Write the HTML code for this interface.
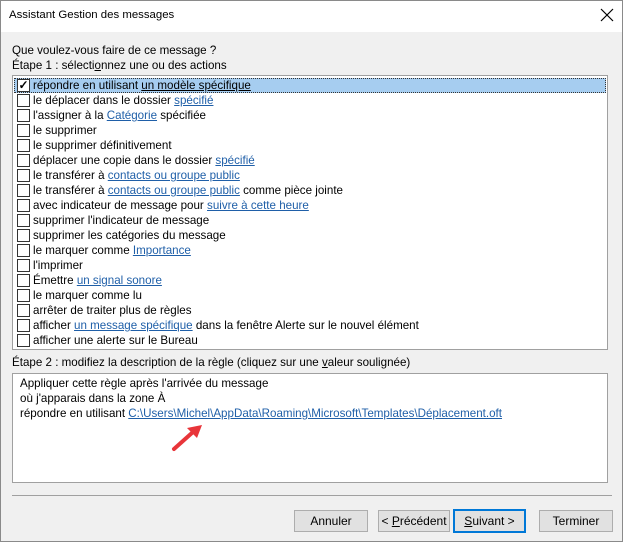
<!DOCTYPE html>
<html><head><meta charset="utf-8"><style>
body{margin:0;width:623px;height:542px;overflow:hidden;font-family:"Liberation Sans",sans-serif;font-size:11.6px;color:#000;background:#f0f0f0;position:relative}
.win{position:absolute;left:0;top:0;width:621px;height:540px;border:1px solid #8a8a8a;background:#f0f0f0}
.title{position:absolute;left:0;top:0;width:621px;height:31px;background:#fff}
.t{position:absolute;white-space:nowrap}
a{color:#1f5fa8;text-decoration:underline}
.list{position:absolute;left:11px;top:74px;width:594px;height:273px;border:1px solid #a0a0a0;background:#fff}
.row{position:absolute;left:1px;height:15px;width:592px;line-height:15px}
.row .cb{position:absolute;left:3px;top:1px;width:11px;height:11px;border:1px solid #333;background:#fff}
.row span.tx{position:absolute;left:19px;top:0}
.sel{background:#a6cdf0;outline:1px dotted #333;outline-offset:-1px}
.desc{position:absolute;left:11px;top:372px;width:594px;height:108px;border:1px solid #a0a0a0;background:#fff}
.btn{position:absolute;top:509px;height:20px;border:1px solid #adadad;background:#e1e1e1;text-align:center;line-height:20px;font-size:12px}
</style></head><body>
<div class="win">
<div class="title"></div>
<div class="t" style="left:8px;top:8px;font-size:11.4px">Assistant Gestion des messages</div>
<svg style="position:absolute;left:599px;top:7px" width="14" height="14"><path d="M1 1 L13 13 M13 1 L1 13" stroke="#000" stroke-width="1.2"/></svg>
<div class="t" style="left:11px;top:43px">Que voulez-vous faire de ce message ?</div>
<div class="t" style="left:11px;top:58px">Étape 1 : sélecti<u>o</u>nnez une ou des actions</div>
<div class="list">
<div class="row sel" style="top:2px"><div class="cb" style="text-align:center;line-height:11px;font-size:12px;font-weight:bold">✓</div><span class="tx">répondre en utilisant <u>un modèle spécifique</u></span></div>
<div class="row" style="top:17px"><div class="cb"></div><span class="tx">le déplacer dans le dossier <a>spécifié</a></span></div>
<div class="row" style="top:32px"><div class="cb"></div><span class="tx">l'assigner à la <a>Catégorie</a> spécifiée</span></div>
<div class="row" style="top:47px"><div class="cb"></div><span class="tx">le supprimer</span></div>
<div class="row" style="top:62px"><div class="cb"></div><span class="tx">le supprimer définitivement</span></div>
<div class="row" style="top:77px"><div class="cb"></div><span class="tx">déplacer une copie dans le dossier <a>spécifié</a></span></div>
<div class="row" style="top:92px"><div class="cb"></div><span class="tx">le transférer à <a>contacts ou groupe public</a></span></div>
<div class="row" style="top:107px"><div class="cb"></div><span class="tx">le transférer à <a>contacts ou groupe public</a> comme pièce jointe</span></div>
<div class="row" style="top:122px"><div class="cb"></div><span class="tx">avec indicateur de message pour <a>suivre à cette heure</a></span></div>
<div class="row" style="top:137px"><div class="cb"></div><span class="tx">supprimer l'indicateur de message</span></div>
<div class="row" style="top:152px"><div class="cb"></div><span class="tx">supprimer les catégories du message</span></div>
<div class="row" style="top:167px"><div class="cb"></div><span class="tx">le marquer comme <a>Importance</a></span></div>
<div class="row" style="top:182px"><div class="cb"></div><span class="tx">l'imprimer</span></div>
<div class="row" style="top:197px"><div class="cb"></div><span class="tx">Émettre <a>un signal sonore</a></span></div>
<div class="row" style="top:212px"><div class="cb"></div><span class="tx">le marquer comme lu</span></div>
<div class="row" style="top:227px"><div class="cb"></div><span class="tx">arrêter de traiter plus de règles</span></div>
<div class="row" style="top:242px"><div class="cb"></div><span class="tx">afficher <a>un message spécifique</a> dans la fenêtre Alerte sur le nouvel élément</span></div>
<div class="row" style="top:257px"><div class="cb"></div><span class="tx">afficher une alerte sur le Bureau</span></div>
</div>
<div class="t" style="left:11px;top:355px">Étape 2 : modifiez la description de la règle (cliquez sur une <u>v</u>aleur soulignée)</div>
<div class="desc">
<div class="t" style="left:7px;top:3px">Appliquer cette règle après l'arrivée du message</div>
<div class="t" style="left:7px;top:18px">où j'apparais dans la zone À</div>
<div class="t" style="left:7px;top:33px">répondre en utilisant <a>C:\Users\Michel\AppData\Roaming\Microsoft\Templates\Déplacement.oft</a></div>
</div>
<svg style="position:absolute;left:160px;top:415px" width="50" height="40"><path d="M13 33 L32 16" stroke="#e8353a" stroke-width="4" stroke-linecap="round"/><path d="M41 9 L26 12 L36 22 Z" fill="#e8353a"/></svg>
<div style="position:absolute;left:11px;top:494px;width:600px;height:1px;background:#a0a0a0"></div>
<div class="btn" style="left:293px;width:72px">Annuler</div>
<div class="btn" style="left:377px;width:70px">&lt; <u>P</u>récédent</div>
<div class="btn" style="left:452px;width:69px;border:2px solid #0078d7;top:508px"><u>S</u>uivant &gt;</div>
<div class="btn" style="left:538px;width:72px">Terminer</div>
</div>
</body></html>
